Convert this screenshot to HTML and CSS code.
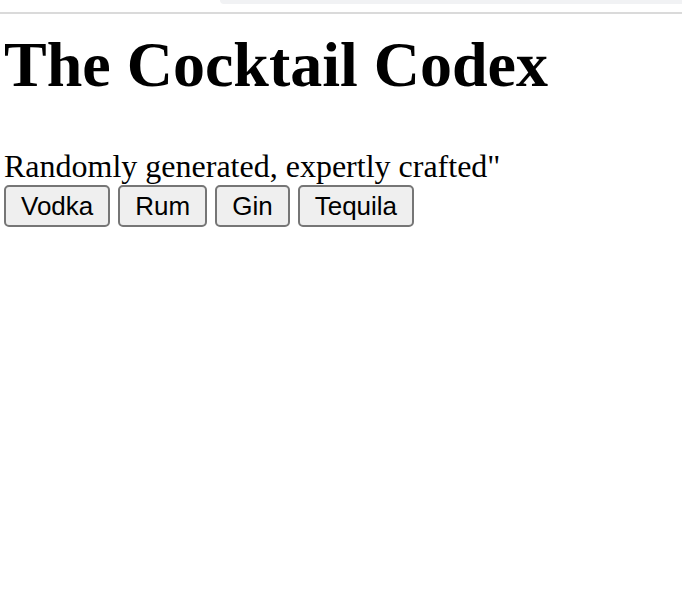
FILE: index.html
```html
<!DOCTYPE html>
<html lang="en">
<head>
  <meta charset="UTF-8" />
  <title>The Cocktail Codex</title>
  <link rel="stylesheet" href="styles.css">
</head>
<body>
  <div class="chrome">
    <div class="tab"></div>
  </div>
  <div class="page">
    <h1>The Cocktail Codex</h1>
    <p class="tagline">Randomly generated, expertly crafted"</p>
    <div class="spirits">
      <button>Vodka</button>
      <button>Rum</button>
      <button>Gin</button>
      <button>Tequila</button>
    </div>
  </div>
</body>
</html>
```

FILE: styles.css
```css
body {
  margin: 0;
  background: #fff;
  color: #000;
  font-family: "Liberation Serif", "Times New Roman", serif;
}
.chrome {
  height: 12px;
  border-bottom: 2px solid #dadada;
  display: flex;
  justify-content: flex-end;
}
.tab {
  width: 462px;
  height: 4px;
  background: #f1f2f4;
  border-bottom-left-radius: 12px;
}
.page {
  padding: 0 4px;
}
h1 {
  font-size: 64px;
  line-height: 74px;
  margin: 14px 0 0;
}
.tagline {
  font-size: 32px;
  line-height: 34px;
  margin: 47px 0 0;
}
.spirits {
  display: flex;
  gap: 8px;
  margin-top: 2px;
}
.spirits button {
  font-family: "Liberation Sans", Arial, sans-serif;
  font-size: 26px;
  height: 42px;
  padding: 0 15px;
  background: #efefef;
  border: 2px solid #767676;
  border-radius: 5px;
  color: #000;
}
```
